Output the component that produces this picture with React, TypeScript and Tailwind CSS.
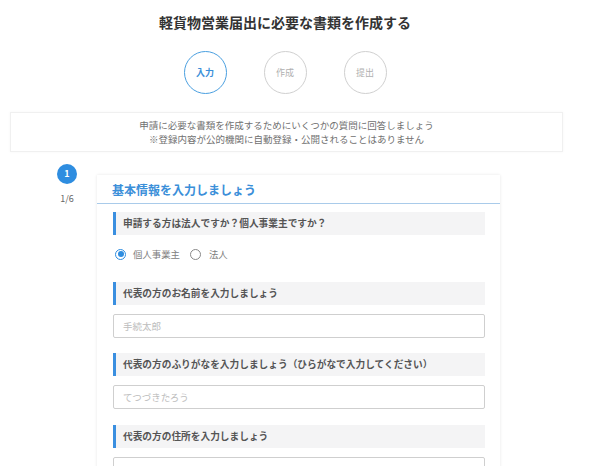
import * as React from "react";

const font = { fontFamily: '"Noto Sans CJK JP", "Noto Sans", sans-serif' };

const Question = ({ text }: { text: string }) => (
  <div className="flex h-[23px] items-center border-l-[3px] border-[#3a8fe0] bg-[#f4f4f5] pl-[7px] text-[9.7px] font-bold text-[#555]">
    {text}
  </div>
);

const Field = ({ placeholder }: { placeholder: string }) => (
  <div className="mt-[9px] flex h-[24px] items-center rounded-[2px] border border-[#cfcfcf] bg-white pl-[9px] text-[9.5px] text-[#bdbdbd]">
    {placeholder}
  </div>
);

const StepCircle = ({ label, active }: { label: string; active?: boolean }) => (
  <div
    className={
      active
        ? "flex h-[43px] w-[43px] items-center justify-center rounded-full border-[1.5px] border-[#4a9fe0] text-[9px] font-bold text-[#3a8fd9]"
        : "flex h-[43px] w-[43px] items-center justify-center rounded-full border border-[#d0d0d0] text-[9px] text-[#b0b0b0]"
    }
  >
    {label}
  </div>
);

export default function App() {
  return (
    <div className="h-[466px] w-[600px] overflow-hidden bg-white" style={font}>
      <div className="w-[570px] px-[10px]">
        <h1 className="pt-[12px] text-center text-[14px] font-bold leading-[20px] text-[#333]">
          軽貨物営業届出に必要な書類を作成する
        </h1>
        <div className="mt-[19px] flex justify-center gap-[37px]">
          <StepCircle label="入力" active />
          <StepCircle label="作成" />
          <StepCircle label="提出" />
        </div>
        <div className="mt-[18px] flex h-[40px] w-[553px] flex-col items-center justify-center border border-[#f0f0f0] text-[9.5px] leading-[14px] text-[#707070] shadow-[0_0_3px_rgba(0,0,0,0.04)]">
          <p>申請に必要な書類を作成するためにいくつかの質問に回答しましょう</p>
          <p>※登録内容が公的機関に自動登録・公開されることはありません</p>
        </div>
      </div>

      <div className="mt-[12px] flex pl-[47px]">
        <div className="flex w-[40px] flex-col items-center">
          <div className="flex h-[20px] w-[20px] items-center justify-center rounded-full bg-[#2e8de0] text-[9px] font-bold text-white">
            1
          </div>
          <div className="mt-[8px] text-[9px] text-[#666]">1/6</div>
        </div>
        <div className="ml-[10px] mt-[11px] h-[400px] w-[403px] bg-white shadow-[0_0_3px_rgba(0,0,0,0.1)]">
          <div className="border-b border-[#a9cbea] pb-[5px] pl-[15px] pt-[7px] text-[12px] font-bold leading-[16px] text-[#3b8fd9]">
            基本情報を入力しましょう
          </div>
          <div className="pl-[16px] pr-[15px] pt-[8px]">
            <Question text="申請する方は法人ですか？個人事業主ですか？" />
            <div className="mt-[13px] flex h-[12px] items-center text-[9.4px] text-[#808080]">
              <span className="ml-[2px] flex h-[11px] w-[11px] items-center justify-center rounded-full border border-[#2e8de0]">
                <span className="h-[6px] w-[6px] rounded-full bg-[#2e8de0]" />
              </span>
              <span className="ml-[7px]">個人事業主</span>
              <span className="ml-[10px] h-[11px] w-[11px] rounded-full border border-[#888]" />
              <span className="ml-[8px]">法人</span>
            </div>
            <div className="mt-[22px]">
              <Question text="代表の方のお名前を入力しましょう" />
              <Field placeholder="手続太郎" />
            </div>
            <div className="mt-[15px]">
              <Question text="代表の方のふりがなを入力しましょう（ひらがなで入力してください）" />
              <Field placeholder="てつづきたろう" />
            </div>
            <div className="mt-[16px]">
              <Question text="代表の方の住所を入力しましょう" />
              <Field placeholder="" />
            </div>
          </div>
        </div>
      </div>
    </div>
  );
}
